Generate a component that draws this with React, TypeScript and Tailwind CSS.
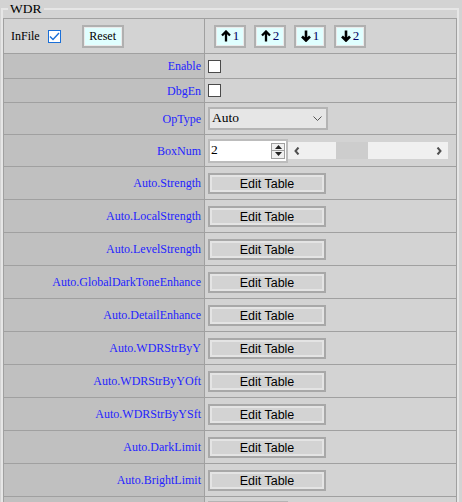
import React from "react";

const serif = "font-['Liberation_Serif','Times_New_Roman',serif]";
const sans = "font-['Liberation_Sans',Arial,sans-serif]";

const tableRows = [
  "Auto.Strength",
  "Auto.LocalStrength",
  "Auto.LevelStrength",
  "Auto.GlobalDarkToneEnhance",
  "Auto.DetailEnhance",
  "Auto.WDRStrByY",
  "Auto.WDRStrByYOft",
  "Auto.WDRStrByYSft",
  "Auto.DarkLimit",
  "Auto.BrightLimit",
];

function Row({ label, h, children }: { label: string; h: string; children?: React.ReactNode }) {
  return (
    <div className="grid grid-cols-[201px_1fr] border-b border-[#a0a0a0]">
      <div
        className={`flex items-center justify-end border-r border-[#a0a0a0] bg-[#c0c0c0] pr-[3px] text-[12px] text-[#2424ff] ${h}`}
      >
        {label}
      </div>
      <div className={`flex items-center pl-[3px] ${h}`}>{children}</div>
    </div>
  );
}

function Box({ checked }: { checked?: boolean }) {
  if (checked) {
    return (
      <span className="flex h-[13px] w-[13px] items-center justify-center border border-[#1a6fd8] bg-white">
        <svg width="11" height="9" viewBox="0 0 11 9">
          <path d="M1 4.5 L4 7.5 L10 1" fill="none" stroke="#1a6fd8" strokeWidth="1.4" />
        </svg>
      </span>
    );
  }
  return <span className="block h-[13px] w-[13px] border border-[#4a4a4a] bg-white" />;
}

function Arrow({ up }: { up?: boolean }) {
  return (
    <svg width="10" height="12" viewBox="0 0 10 12">
      {up ? (
        <path d="M5 11.5 V2 M1 5.5 L5 1.5 L9 5.5" fill="none" stroke="#000" strokeWidth="2.3" />
      ) : (
        <path d="M5 0.5 V10 M1 6.5 L5 10.5 L9 6.5" fill="none" stroke="#000" strokeWidth="2.6" />
      )}
    </svg>
  );
}

function ArrowBtn({ up, n }: { up?: boolean; n: string }) {
  return (
    <button className="flex h-[23px] w-[32px] items-center justify-center gap-[2px] border-2 border-[#b0b0b0] bg-[#e0ffff] shadow-[inset_0_0_0_1px_#eaeaea]">
      <Arrow up={up} />
      <span className={`${serif} text-[13px] text-[#000060]`}>{n}</span>
    </button>
  );
}

function EditBtn() {
  return (
    <button
      className={`${sans} h-[21px] w-[118px] border-2 border-[#a8a8a8] bg-[#d3d3d3] text-[12.5px] text-black shadow-[inset_0_0_0_2px_#e4e4e4]`}
    >
      Edit Table
    </button>
  );
}

export default function App() {
  return (
    <div className={`${serif} min-h-[502px] bg-[#d3d3d3] pt-px`}>
      <fieldset className="ml-px w-[458px] border-2 border-[#e6e6e6]">
        <legend className="ml-[5px] px-[2px] text-[13.5px] leading-[15px] text-black">WDR</legend>
        <div className="mt-[2px] border border-[#a0a0a0]">
          <div className="grid grid-cols-[201px_1fr] border-b border-[#a0a0a0]">
            <div className="flex h-[34px] items-center border-r border-[#a0a0a0] pl-[7px] text-[12px]">
              <span>InFile</span>
              <span className="ml-[8px]">
                <Box checked />
              </span>
              <button className="ml-[21px] h-[23px] w-[42px] border-2 border-[#b0b0b0] bg-[#e0ffff] text-[12px] shadow-[inset_0_0_0_1px_#eaeaea]">
                Reset
              </button>
            </div>
            <div className="flex h-[34px] items-center gap-[8px] pl-[9px]">
              <ArrowBtn up n="1" />
              <ArrowBtn up n="2" />
              <ArrowBtn n="1" />
              <ArrowBtn n="2" />
            </div>
          </div>
          <Row label="Enable" h="h-[24px]">
            <Box />
          </Row>
          <Row label="DbgEn" h="h-[23px]">
            <Box />
          </Row>
          <Row label="OpType" h="h-[31px]">
            <div className="flex h-[23px] w-[120px] items-center justify-between border-2 border-[#b4b4b4] bg-[#e6e6e6] pl-[2px] pr-[4px] text-[13.5px]">
              <span>Auto</span>
              <svg width="9" height="6" viewBox="0 0 9 6">
                <path d="M0.5 0.5 L4.5 4.5 L8.5 0.5" fill="none" stroke="#555" strokeWidth="1" />
              </svg>
            </div>
          </Row>
          <Row label="BoxNum" h="h-[31px]">
            <div className="flex h-[24px] w-[80px] items-center justify-between border-2 border-[#bcbcbc] bg-white pr-[1px] text-[13.5px]">
              <span className="pl-px">2</span>
              <div className="flex h-[16px] w-[14px] flex-col border border-[#a0a0a0] bg-[#f0f0f0]">
                <div className="flex flex-1 items-center justify-center border-b border-[#a0a0a0]">
                  <svg width="7" height="4" viewBox="0 0 7 4">
                    <path d="M0 4 L3.5 0 L7 4 Z" fill="#222" />
                  </svg>
                </div>
                <div className="flex flex-1 items-center justify-center">
                  <svg width="7" height="4" viewBox="0 0 7 4">
                    <path d="M0 0 L3.5 4 L7 0 Z" fill="#222" />
                  </svg>
                </div>
              </div>
            </div>
            <div className="flex h-[17px] w-[160px] items-center bg-[#f0f0f0] px-[6px]">
              <svg width="6" height="8" viewBox="0 0 6 8">
                <path d="M4.5 0.5 L1.5 4 L4.5 7.5" fill="none" stroke="#505050" strokeWidth="2" />
              </svg>
              <div className="ml-[36px] h-[17px] w-[32px] bg-[#cdcdcd]" />
              <div className="flex-1" />
              <svg width="6" height="8" viewBox="0 0 6 8">
                <path d="M1.5 0.5 L4.5 4 L1.5 7.5" fill="none" stroke="#505050" strokeWidth="2" />
              </svg>
            </div>
          </Row>
          {tableRows.map((l) => (
            <Row key={l} label={l} h="h-[32px]">
              <EditBtn />
            </Row>
          ))}
          <Row label="" h="h-[31px]">
            <div className="h-[23px] w-[80px] border-2 border-[#b4b4b4] bg-[#e6e6e6]" />
          </Row>
        </div>
      </fieldset>
    </div>
  );
}
